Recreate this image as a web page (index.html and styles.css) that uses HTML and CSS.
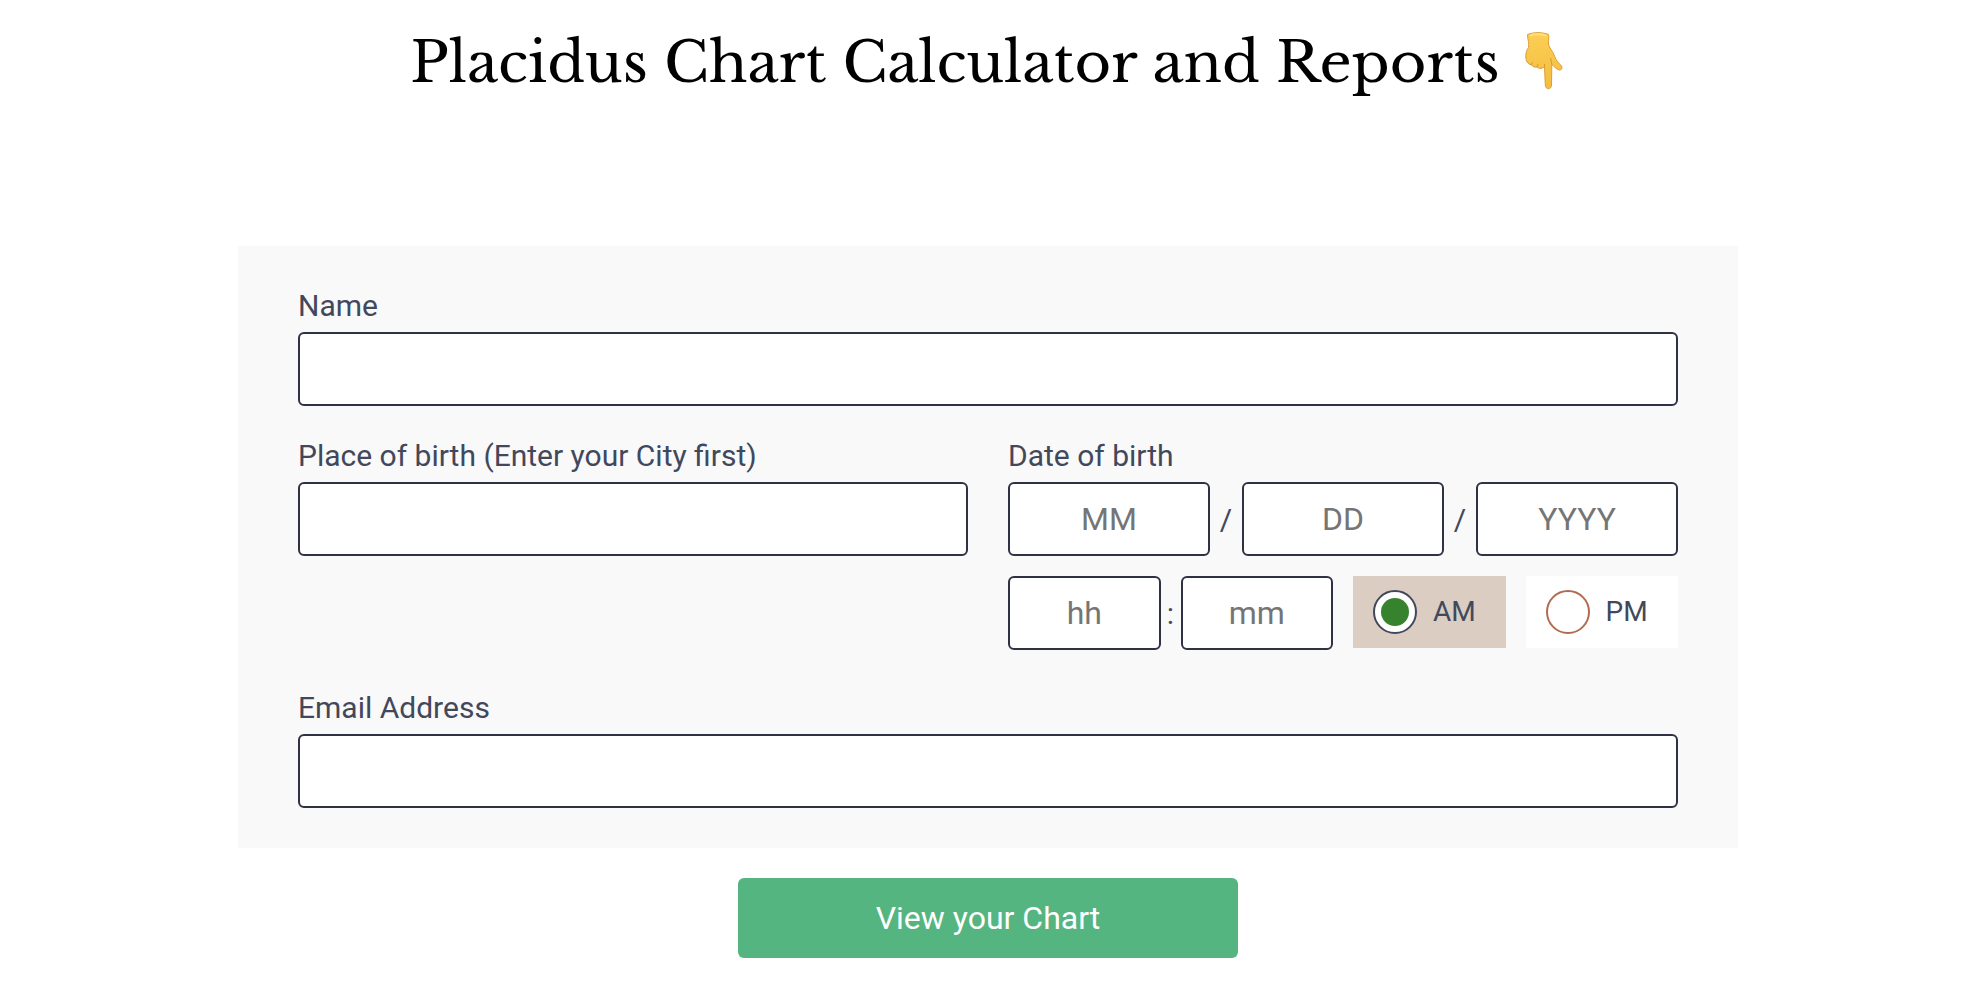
FILE: index.html
```html
<!DOCTYPE html>
<html lang="en">
<head>
    <meta charset="UTF-8">
    <meta name="viewport" content="width=device-width, initial-scale=1.0">
    <title>Placidus Chart Calculator and Reports</title>
    <link rel="stylesheet" href="styles.css">
</head>
<body>

    <h1>
        <span>Placidus Chart Calculator and Reports</span>
        <svg class="hand" viewBox="0 0 56 64" aria-hidden="true">
            <defs>
                <linearGradient id="skin" x1="0" y1="0" x2="0" y2="1">
                    <stop offset="0" stop-color="#fbcf55"/>
                    <stop offset="1" stop-color="#f3bc3e"/>
                </linearGradient>
            </defs>
            <path fill="url(#skin)" stroke="#dc9f35" stroke-width="1" d="M17.500 3.500C24 1 32 1 38.500 3.500C39.500 6 38 10 38.500 13C39 17 43 20 44.500 25C46 30 49 32 51.500 35C53 38 50.500 40 48 38.500C45 37 43 34.500 41.800 33L41.500 54C41.500 59 35.500 59 35.300 54L34.500 36C31 38 28.500 37.500 27 36C25 36.500 22.500 35.500 21.500 34C17.500 33 16 30 15.800 26C15.700 22 16.500 19 18.500 16.500C19.500 13 17.500 8 17.500 3.500Z"/>
            <path fill="none" stroke="#d9982f" stroke-width="1" d="M21.500 34C21.800 33 22 32 22 31M27 36C27.500 35 28 34 28 33M34.500 36L34.500 33M41.800 33L40.500 27"/>
            <path fill="none" stroke="#ffe07a" stroke-width="2" d="M20 4.500C25 2.800 31 2.800 36 4.500"/>
        </svg>
    </h1>

    <form>

        <!-- Birth Details Section -->
        <div class="details">
            <div class="field">
                <label for="name">Name</label>
                <input type="text" id="name">
            </div>

            <div class="birth">
                <div class="field">
                    <label for="place">Place of birth (Enter your City first)</label>
                    <input type="text" id="place">
                </div>

                <div class="field">
                    <label for="month">Date of birth</label>
                    <div class="date">
                        <input type="text" id="month" placeholder="MM">
                        <span>/</span>
                        <input type="text" id="day" placeholder="DD" aria-label="Day">
                        <span>/</span>
                        <input type="text" id="year" placeholder="YYYY" aria-label="Year">
                    </div>
                    <div class="time">
                        <div class="clock">
                            <input type="text" id="hour" placeholder="hh" aria-label="Hour">
                            <span>:</span>
                            <input type="text" id="minute" placeholder="mm" aria-label="Minute">
                        </div>
                        <div class="periods">
                            <label class="am" for="am"><input type="radio" id="am" name="period" checked>AM</label>
                            <label for="pm"><input type="radio" id="pm" name="period">PM</label>
                        </div>
                    </div>
                </div>
            </div>

            <div class="field">
                <label for="email">Email Address</label>
                <input type="email" id="email">
            </div>
        </div>

        <button type="button">View your Chart</button>
    </form>

</body>
</html>
```
FILE: styles.css
```css
* {
    margin: 0;
    padding: 0;
    box-sizing: border-box;
}

body {
    font-family: Roboto, sans-serif;
    background-color: #fff;
    color: #42485c;
    padding: 23px 6px 32px 0;
}

h1 {
    display: flex;
    justify-content: center;
    align-items: center;
    gap: 10px;
    font-family: 'Libre Baskerville', 'Liberation Serif', serif;
    font-size: 56px;
    font-weight: 400;
    line-height: 80px;
    color: #000;
    margin-bottom: 143px;
}

.hand {
    width: 56px;
    height: 64px;
}

form {
    display: flex;
    flex-direction: column;
    align-items: center;
    gap: 30px;
}

.details {
    width: 100%;
    max-width: 1500px;
    padding: 40px 60px;
    background-color: #f9f9f9;
}

.field label {
    display: block;
    font-size: 30px;
    line-height: 40px;
    margin-bottom: 6px;
}

.field input {
    display: block;
    width: 100%;
    min-width: 0;
    height: 74px;
    padding: 0 16px;
    border: 2px solid #2f3144;
    border-radius: 6px;
    background-color: #fff;
    color: #42485c;
    font-family: inherit;
    font-size: 32px;
}

.field input::placeholder {
    color: #757575;
}

.birth {
    display: grid;
    grid-template-columns: 1fr 1fr;
    gap: 40px;
    margin: 30px 0 38px;
}

.date, .clock {
    display: grid;
    align-items: center;
    text-align: center;
    font-size: 30px;
}

.date {
    grid-template-columns: 1fr 32px 1fr 32px 1fr;
    margin-bottom: 20px;
}

.clock {
    grid-template-columns: 1fr 20px 1fr;
}

.date input, .clock input {
    text-align: center;
}

.time {
    display: grid;
    grid-template-columns: 1fr 1fr;
    gap: 20px;
}

/* AM / PM switch */
.periods {
    display: grid;
    grid-template-columns: 1fr 1fr;
    align-items: start;
    gap: 20px;
}

.periods label {
    display: flex;
    align-items: center;
    gap: 16px;
    height: 72px;
    margin: 0;
    padding: 0 20px;
    background-color: #fff;
    font-size: 28px;
}

.periods .am {
    background-color: #dbcdc2;
}

.periods input {
    appearance: none;
    flex: none;
    width: 44px;
    height: 44px;
    padding: 6px;
    border: 2px solid #b26b50;
    border-radius: 50%;
}

.periods input:checked {
    border-color: #42485c;
}

.periods input:checked::before {
    content: '';
    display: block;
    width: 28px;
    height: 28px;
    border-radius: 50%;
    background-color: #37822d;
}

button {
    width: 100%;
    max-width: 500px;
    height: 80px;
    border: none;
    border-radius: 6px;
    background-color: #55b580;
    color: #fff;
    font-family: inherit;
    font-size: 32px;
    cursor: pointer;
}
```
